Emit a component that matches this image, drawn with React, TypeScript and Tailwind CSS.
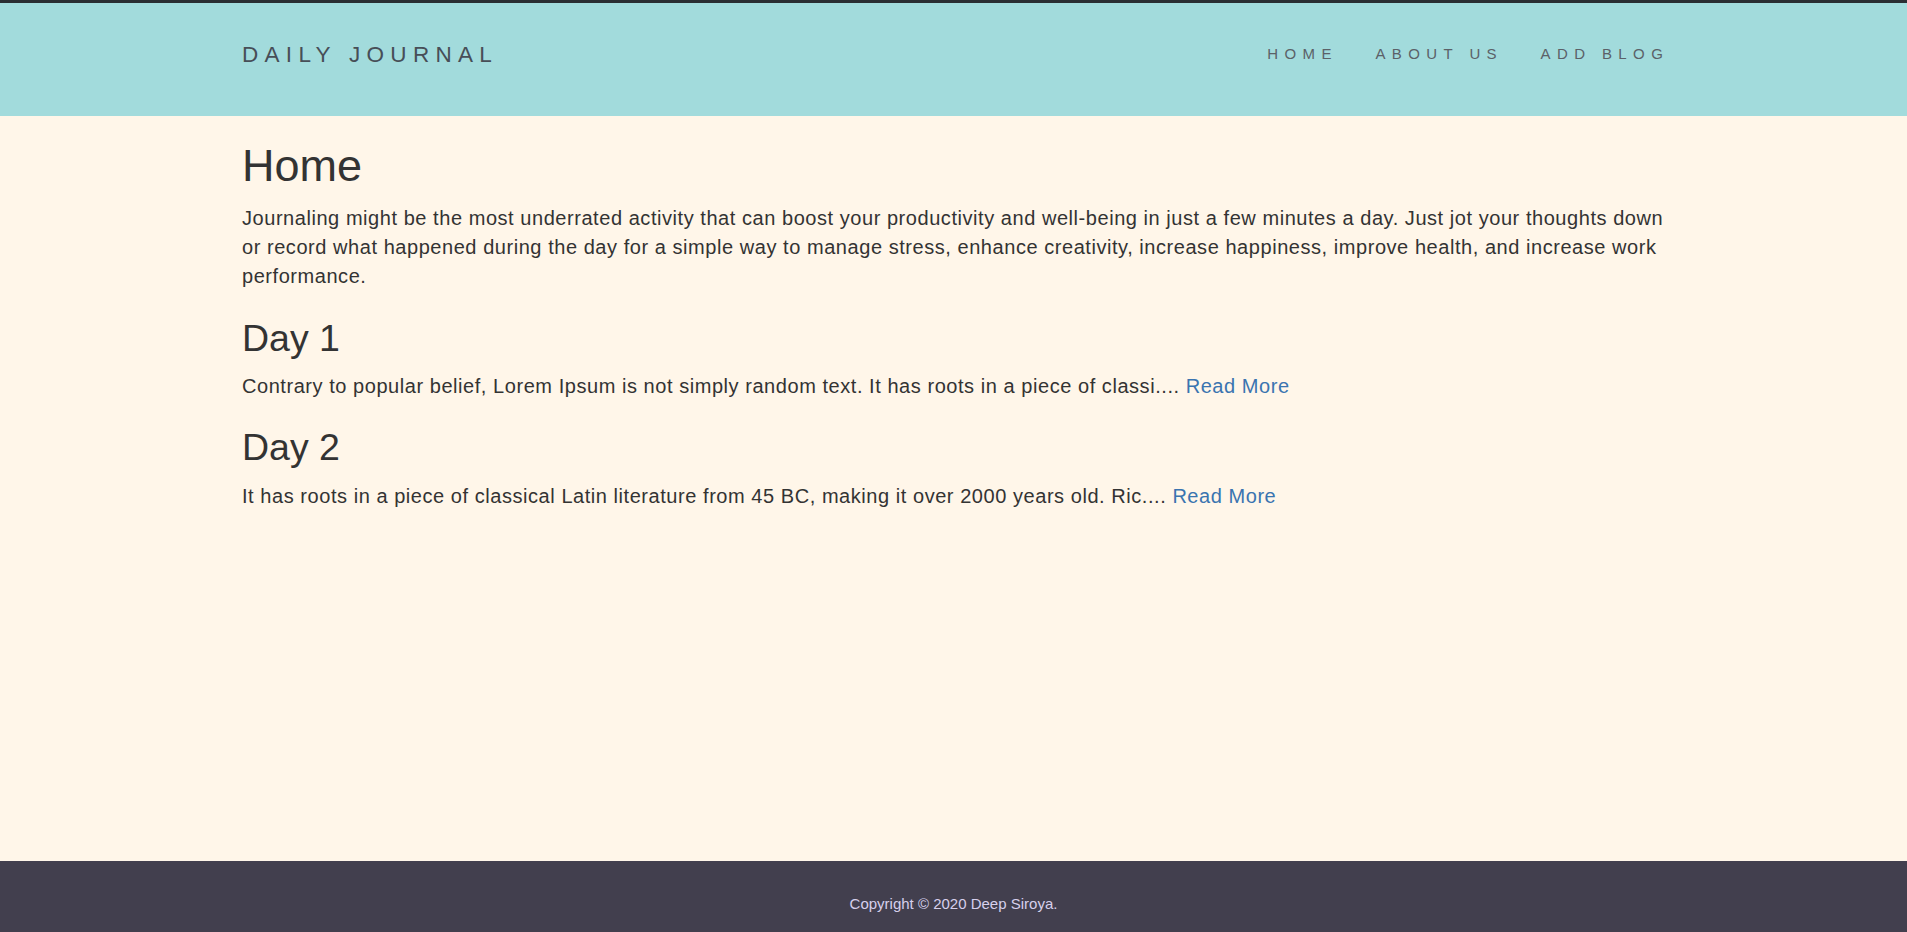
import React from "react";

const posts = [
  {
    title: "Day 1",
    body: "Contrary to popular belief, Lorem Ipsum is not simply random text. It has roots in a piece of classi....",
  },
  {
    title: "Day 2",
    body: "It has roots in a piece of classical Latin literature from 45 BC, making it over 2000 years old. Ric....",
  },
];

export default function App() {
  return (
    <div
      className="min-h-screen flex flex-col bg-[#fff6e9] text-[#333333]"
      style={{ fontFamily: '"Liberation Sans", Arial, Helvetica, sans-serif' }}
    >
      <div className="h-[3px] bg-[#2a2e33]" />
      <header className="h-[113px] bg-[#a2dbdc]">
        <div className="mx-auto w-[1425px] pl-[1px] flex justify-between items-start pt-[39px]">
          <a className="text-[22.5px] leading-[25px] tracking-[6.3px] text-[#474e57]">DAILY JOURNAL</a>
          <nav className="flex mt-[2px] mr-[-22px]">
            {["HOME", "ABOUT US", "ADD BLOG"].map((l) => (
              <a key={l} className="px-[18.75px] text-[15px] leading-[20px] tracking-[6.4px] text-[#5b6168]">
                {l}
              </a>
            ))}
          </nav>
        </div>
      </header>
      <main className="flex-1">
        <div className="mx-auto w-[1425px] pl-[1px]">
          <h1 className="mt-[25px] mb-[13px] text-[45px] leading-[49.5px]">Home</h1>
          <p className="text-[20px] leading-[29px] tracking-[0.55px]">
            Journaling might be the most underrated activity that can boost your productivity and well-being in just a few minutes a day. Just jot your thoughts down or record what happened during the day for a simple way to manage stress, enhance creativity, increase happiness, improve health, and increase work performance.
          </p>
          {posts.map((p) => (
            <div key={p.title}>
              <h2 className="mt-[27px] mb-[13px] text-[37.5px] leading-[41.25px]">{p.title}</h2>
              <p className="text-[20px] leading-[28.6px] tracking-[0.55px]">
                {p.body} <a className="text-[#3a74b0]">Read More</a>
              </p>
            </div>
          ))}
        </div>
      </main>
      <footer className="h-[71px] bg-[#423f4e] pt-[33px] text-center">
        <p className="text-[15px] leading-[20px] text-[#d6d0ec]">Copyright © 2020 Deep Siroya.</p>
      </footer>
    </div>
  );
}
